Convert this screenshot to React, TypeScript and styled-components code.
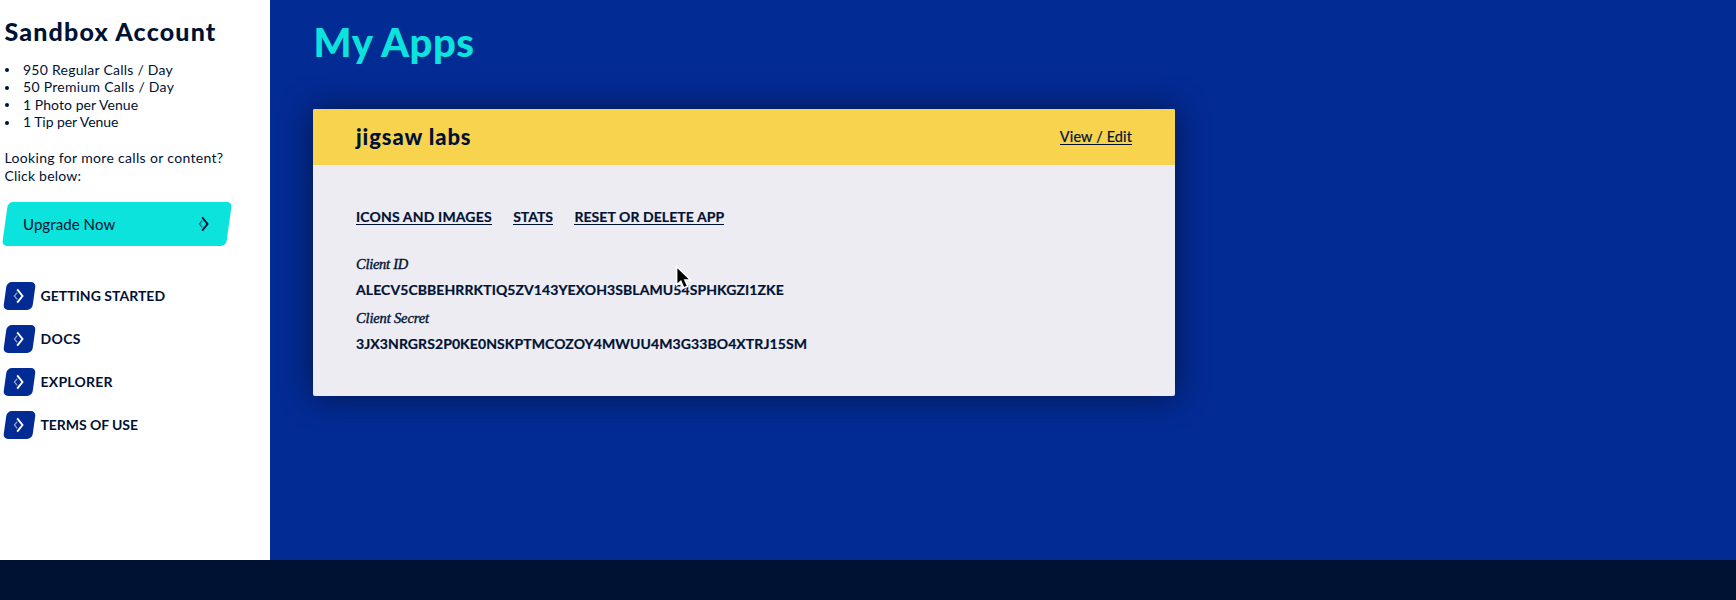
import React from "react";
import styled, { createGlobalStyle } from "styled-components";

const navy = "#001234";
const blue = "#032b94";
const teal = "#0be3dc";

const GlobalStyle = createGlobalStyle`
  *, *::before, *::after { box-sizing: border-box; }
  body {
    margin: 0;
    background: ${navy};
    color: ${navy};
    font-family: Lato, "Liberation Sans", sans-serif;
    overflow: hidden;
  }
`;

const Page = styled.div`
  display: flex;
  flex-direction: column;
  height: 600px;
`;

const Columns = styled.div`
  display: grid;
  grid-template-columns: 270px 1fr;
  height: 560px;
`;

const Footer = styled.footer`
  flex: 1;
  background: ${navy};
`;

const Sidebar = styled.aside`
  background: #fff;
  padding: 15px 0 0 4px;
`;

const Tracked = styled.span<{ $track?: number }>`
  letter-spacing: ${(p) => p.$track ?? 0}px;
`;

const AccountTitle = styled.h2`
  margin: 0;
  padding-left: 0.5px;
  font-size: 25px;
  line-height: 32px;
  font-weight: 900;
  white-space: nowrap;
`;

const Limits = styled.ul`
  margin: 13.5px 0 18.5px;
  padding: 0 0 0 0.5px;
  list-style: none;
`;

const Limit = styled.li`
  display: flex;
  align-items: center;
  gap: 14.5px;
  height: 17.5px;
  font-size: 14px;
  line-height: 17.5px;
  &::before {
    content: "";
    width: 4px;
    height: 4px;
    margin-top: 2px;
    border-radius: 50%;
    background: ${navy};
  }
`;

const Prompt = styled.p`
  margin: 0;
  padding-left: 0.5px;
  font-size: 14px;
  line-height: 17.5px;
  white-space: nowrap;
`;

const UpgradeButton = styled.a`
  position: relative;
  z-index: 0;
  display: flex;
  align-items: center;
  justify-content: space-between;
  width: 225px;
  height: 44px;
  margin: 18px 0 36px;
  padding: 0 19px 1px 19px;
  font-size: 15px;
  &::before {
    content: "";
    position: absolute;
    z-index: -1;
    inset: 0 0.5px 0 1px;
    border-radius: 5px;
    background: ${teal};
    transform: skewX(-8deg);
  }
`;

const Nav = styled.nav`
  display: flex;
  flex-direction: column;
  gap: 15px;
  padding-left: 1px;
`;

const NavLink = styled.a`
  display: flex;
  align-items: center;
  gap: 7px;
  height: 28px;
  font-size: 14px;
  font-weight: 700;
  white-space: nowrap;
  & > span:last-child { padding-bottom: 2px; }
`;

const Badge = styled.span`
  display: flex;
  align-items: center;
  justify-content: center;
  width: 28.5px;
  height: 28px;
  border-radius: 5px;
  background: ${blue};
  transform: skewX(-8deg);
  svg { transform: skewX(8deg); }
`;

const Main = styled.main`
  background: ${blue};
  padding: 16px 0 0 43px;
`;

const PageTitle = styled.h1`
  margin: 0 0 41px 0.5px;
  color: ${teal};
  font-size: 40px;
  line-height: 52px;
  font-weight: 900;
`;

const Card = styled.section`
  position: relative;
  width: 862px;
  height: 287px;
  border-radius: 2px;
  background: #edecf2;
  box-shadow: 0 0 30px rgba(0, 18, 52, 0.8);
`;

const CardHeader = styled.header`
  display: flex;
  align-items: center;
  justify-content: space-between;
  height: 56px;
  padding: 0 43px;
  border-radius: 2px 2px 0 0;
  background: #f8d34e;
`;

const AppName = styled.h3`
  margin: 0;
  font-size: 22px;
  line-height: 28px;
  font-weight: 900;
`;

const Underlined = styled.a<{ $bold?: boolean }>`
  border-bottom: 1px solid ${navy};
  font-size: ${(p) => (p.$bold ? 14 : 14.5)}px;
  font-weight: ${(p) => (p.$bold ? 700 : 400)};
  line-height: 15px;
  white-space: nowrap;
  -webkit-text-stroke: 0.2px ${navy};
`;

const CardBody = styled.div`
  padding: 44px 43px 0;
`;

const Actions = styled.div`
  display: flex;
  gap: 21.5px;
  margin-bottom: 26px;
`;

const Credentials = styled.dl`
  margin: 0;
`;

const Label = styled.dt`
  height: 27px;
  font: italic 14.5px/27px "Liberation Serif", serif;
  -webkit-text-stroke: 0.4px ${navy};
`;

const Value = styled.dd`
  margin: 0;
  height: 27px;
  font-size: 14px;
  font-weight: 700;
  line-height: 24px;
  white-space: nowrap;
  -webkit-text-stroke: 0.2px ${navy};
`;

const Cursor = styled.svg`
  position: absolute;
  left: 361px;
  top: 156px;
`;

const Chevron = ({ color }: { color: string }) => (
  <svg width="12" height="16" viewBox="0 0 12 16" fill="none" stroke={color}>
    <path d="M4.2 1.4 9.5 8l-5.3 6.6" strokeWidth="1.9" />
    <path d="M4.2 4.6 1.4 8l2.8 3.4" strokeWidth="1.3" opacity="0.55" />
  </svg>
);

const limits: [string, number][] = [
  ["950 Regular Calls / Day", 0.25],
  ["50 Premium Calls / Day", 0.28],
  ["1 Photo per Venue", 0.06],
  ["1 Tip per Venue", -0.06],
];

const links: [string, number][] = [
  ["GETTING STARTED", 0.03],
  ["DOCS", 0.35],
  ["EXPLORER", 0.22],
  ["TERMS OF USE", -0.06],
];

const actions: [string, number][] = [
  ["ICONS AND IMAGES", 0.16],
  ["STATS", -0.05],
  ["RESET OR DELETE APP", 0.08],
];

export default function App() {
  return (
    <Page>
      <GlobalStyle />
      <Columns>
        <Sidebar>
          <AccountTitle><Tracked $track={1.17}>Sandbox Account</Tracked></AccountTitle>
          <Limits>
            {limits.map(([text, track]) => (
              <Limit key={text}><Tracked $track={track}>{text}</Tracked></Limit>
            ))}
          </Limits>
          <Prompt>
            <Tracked $track={0.33}>Looking for more calls or content?</Tracked><br />
            <Tracked $track={0.2}>Click below:</Tracked>
          </Prompt>
          <UpgradeButton>
            <Tracked $track={0.08}>Upgrade Now</Tracked>
            <Chevron color={navy} />
          </UpgradeButton>
          <Nav>
            {links.map(([text, track]) => (
              <NavLink key={text}>
                <Badge><Chevron color="#fff" /></Badge>
                <Tracked $track={track}>{text}</Tracked>
              </NavLink>
            ))}
          </Nav>
        </Sidebar>
        <Main>
          <PageTitle><Tracked $track={0.5}>My Apps</Tracked></PageTitle>
          <Card>
            <CardHeader>
              <AppName><Tracked $track={0.88}>jigsaw labs</Tracked></AppName>
              <Underlined><Tracked $track={0.12}>View / Edit</Tracked></Underlined>
            </CardHeader>
            <CardBody>
              <Actions>
                {actions.map(([text, track]) => (
                  <Underlined key={text} $bold><Tracked $track={track}>{text}</Tracked></Underlined>
                ))}
              </Actions>
              <Credentials>
                <Label><Tracked $track={-0.26}>Client ID</Tracked></Label>
                <Value><Tracked $track={0.08}>ALECV5CBBEHRRKTIQ5ZV143YEXOH3SBLAMU54SPHKGZI1ZKE</Tracked></Value>
                <Label><Tracked $track={-0.15}>Client Secret</Tracked></Label>
                <Value><Tracked $track={0.09}>3JX3NRGRS2P0KE0NSKPTMCOZOY4MWUU4M3G33BO4XTRJ15SM</Tracked></Value>
              </Credentials>
            </CardBody>
            <Cursor width="20" height="26" viewBox="0 0 20 26">
              <path d="M2.6 1.5v18.6l4.2-3.8 2.9 6.7 4-1.7-2.8-6.3h5.7z" fill="#000" stroke="#fff" strokeWidth="1.6" />
            </Cursor>
          </Card>
        </Main>
      </Columns>
      <Footer />
    </Page>
  );
}
